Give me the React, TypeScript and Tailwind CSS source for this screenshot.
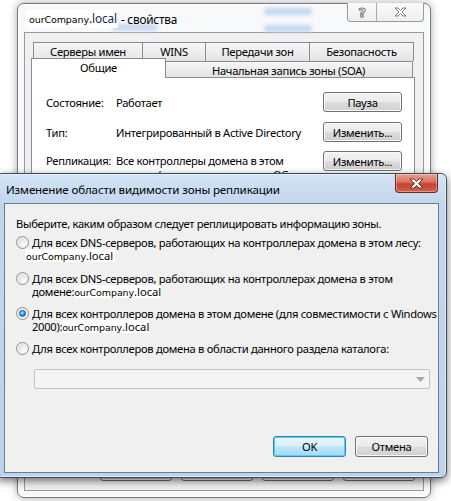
import React from "react";

function Btn({ children, className = "" }: { children?: React.ReactNode; className?: string }) {
  return (
    <div
      className={`flex items-center justify-center rounded-[3px] border border-[#707070] bg-[linear-gradient(#f2f2f2_0%,#ebebeb_48%,#dddddd_52%,#cfcfcf_100%)] shadow-[inset_0_0_0_1px_#fbfbfb] text-black ${className}`}
    >
      {children}
    </div>
  );
}

function Radio({ checked }: { checked?: boolean }) {
  return (
    <div className="flex h-[13px] w-[13px] shrink-0 items-center justify-center rounded-full border border-[#8e8f8f] bg-[radial-gradient(circle_at_65%_70%,#ffffff_0%,#e9e9e9_45%,#cdcdcd_100%)] shadow-[inset_0_0_0_1px_#f4f4f4]">
      {checked && (
        <div className="h-[7px] w-[7px] rounded-full border border-[#1d5a9c] bg-[radial-gradient(circle_at_40%_35%,#a8ecff_0%,#2f8fe6_55%,#0e4a9e_100%)]" />
      )}
    </div>
  );
}

function Domain({ className = "" }: { className?: string }) {
  return (
    <span className={`inline-block h-[13px] bg-white align-top leading-[13px] tracking-normal ${className}`}>
      <span className="[font-family:'DejaVu_Sans',sans-serif] text-[9.5px] tracking-[-0.1px]">ourCompany</span>
      .local
    </span>
  );
}

function CloseX({ color = "#7a7a7a" }: { color?: string }) {
  return (
    <svg width="13" height="10" viewBox="0 0 13 10">
      <path
        d="M1 1 H4 L6.5 3.5 L9 1 H12 L8 5 L12 9 H9 L6.5 6.5 L4 9 H1 L5 5 Z"
        fill="#ffffff"
        stroke={color}
        strokeWidth="1"
        strokeLinejoin="round"
      />
    </svg>
  );
}

const tabCls =
  "flex justify-center border-l border-t border-[#898c95] bg-[linear-gradient(#f6f6f6,#e4e4e4)] pt-[2px]";

export default function App() {
  return (
    <div className="relative h-[501px] w-[451px] overflow-hidden bg-white [font-family:'Noto_Sans',sans-serif] text-[11.2px] leading-[13px] tracking-[-0.3px] text-black">
      {/* back window */}
      <div className="absolute left-[17px] top-[3px] flex h-[495px] w-[414px] flex-col rounded-[7px] border border-[#7a7a7a] bg-[#f8f9fb] shadow-[inset_0_0_0_1px_#ffffff,0_0_8px_rgba(0,0,0,0.35)]">
        <span className="absolute left-[94px] top-[20px] h-[7px] w-[46px] rounded-full bg-[#c9d8f0] blur-[2px]" />
        <span className="absolute left-[246px] top-[4px] h-[7px] w-[48px] rounded-full bg-[#c3d4f0] blur-[2px]" />
        <span className="absolute left-[246px] top-[21px] h-[7px] w-[48px] rounded-full bg-[#c3d4f0] blur-[2px]" />
        {/* title row */}
        <div className="relative flex h-[28px] shrink-0 items-center pl-[8px] pt-[1px]">
          <span className="relative bg-white py-[1px] pl-[3px] pr-[1px] text-[11.8px] leading-[14px] tracking-[-0.1px]">
            <span className="[font-family:'DejaVu_Sans',sans-serif] text-[9.5px] tracking-[-0.1px]">ourCompany</span>
            <span className="text-[#1b2a55]">.local</span>
          </span>
          <span className="relative text-[11.8px] leading-[14px] tracking-[-0.2px]">&nbsp;- свойства</span>
          <div className="absolute right-[6px] top-[-1px] flex h-[19px] overflow-hidden rounded-b-[4px] border border-t-0 border-[#9a9a9a] bg-[linear-gradient(#fafafa,#eeeeee)]">
            <div className="flex w-[29px] items-center justify-center border-r border-[#a9a9a9] text-[13px] font-bold text-white [-webkit-text-stroke:1px_#7a7a7a] [font-family:'DejaVu_Sans',sans-serif]">
              ?
            </div>
            <div className="flex w-[46px] items-center justify-center">
              <CloseX />
            </div>
          </div>
        </div>
        {/* client */}
        <div className="ml-[6px] mr-[6px] flex h-[459px] flex-col border border-[#9a9a9a] bg-[#f0f0f0]">
          <div className="ml-[6px] mt-[9px] flex w-[384px] flex-col">
            {/* row 1 */}
            <div className="ml-[2px] flex h-[19px]">
              <div className={`${tabCls} w-[109px]`}>Серверы имен</div>
              <div className={`${tabCls} w-[63px]`}>WINS</div>
              <div className={`${tabCls} w-[104px]`}>Передачи зон</div>
              <div className={`${tabCls} w-[105px] border-r`}>Безопасность</div>
            </div>
            {/* row 2 */}
            <div className="flex h-[16px] items-end">
              <div className="relative z-10 mb-[-1px] flex h-[20px] w-[135px] justify-center border-l border-r border-t border-[#898c95] bg-white pt-[2px]">
                Общие
              </div>
              <div className="ml-[-1px] flex h-[16px] w-[248px] justify-center border-r border-t border-[#898c95] bg-[linear-gradient(#f6f6f6,#e4e4e4)] pt-[2px]">
                Начальная запись зоны (SOA)
              </div>
            </div>
            {/* panel */}
            <div className="flex h-[373px] flex-col border border-[#898c95] bg-white pl-[14px] pr-[12px] pt-[14px]">
              <div className="flex h-[20px] items-center">
                <div className="w-[70px]">Состояние:</div>
                <div className="flex-1">Работает</div>
                <Btn className="h-[20px] w-[79px]">Пауза</Btn>
              </div>
              <div className="mt-[10px] flex h-[20px] items-center">
                <div className="w-[70px]">Тип:</div>
                <div className="flex-1">Интегрированный в Active Directory</div>
                <Btn className="h-[20px] w-[79px]">Изменить...</Btn>
              </div>
              <div className="mt-[9px] flex items-start">
                <div className="w-[70px] pt-[3px]">Репликация:</div>
                <div className="flex-1 pt-[3px] leading-[14px]">
                  Все контроллеры домена в этом
                  <br />
                  домене (для совместимости с ОС
                </div>
                <Btn className="h-[20px] w-[79px]">Изменить...</Btn>
              </div>
            </div>
          </div>
          <div className="mt-[8px] flex justify-end gap-[9px] pr-[8px]">
            <Btn className="h-[23px] w-[72px]" />
            <Btn className="h-[23px] w-[72px]" />
            <Btn className="h-[23px] w-[72px]" />
            <Btn className="h-[23px] w-[72px]" />
          </div>
        </div>
      </div>

      {/* dialog */}
      <div className="absolute left-[-4px] top-[173px] flex h-[305px] w-[451px] flex-col rounded-[6px] border border-[#3a4a5c] bg-[linear-gradient(180deg,#d3e3f4_0%,#c2d7ee_10%,#bcd3ec_100%)] shadow-[inset_0_0_0_1px_rgba(255,255,255,0.55),0_3px_9px_rgba(0,0,0,0.55)]">
        <div className="relative flex h-[29px] shrink-0 items-center pl-[9px] pt-[3px]">
          <span className="text-[11.6px] leading-[14px] tracking-[-0.15px]">Изменение области видимости зоны репликации</span>
          <div className="absolute right-[8px] top-[0px] flex h-[19px] w-[43px] items-center justify-center rounded-b-[4px] border border-t-0 border-[#6a2a22] bg-[linear-gradient(#e8a194_0%,#d9705f_45%,#c5412e_55%,#d3614c_100%)] shadow-[inset_0_0_0_1px_rgba(255,255,255,0.35)]">
            <svg width="15" height="11" viewBox="0 0 15 11">
              <path
                d="M1 1 H5 L7.5 3.5 L10 1 H14 L9.5 5.5 L14 10 H10 L7.5 7.5 L5 10 H1 L5.5 5.5 Z"
                fill="#ffffff"
                stroke="#5a3a36"
                strokeWidth="1"
                strokeLinejoin="round"
              />
            </svg>
          </div>
        </div>
        <div className="ml-[7px] mr-[7px] flex h-[270px] flex-col border border-[#6c7d91] bg-[#f0f0f0] pl-[11px] pt-[13px]">
          <div>Выберите, каким образом следует реплицировать информацию зоны.</div>
          <div className="mt-[6px] flex gap-[3px]">
            <Radio />
            <div>
              Для всех DNS-серверов, работающих на контроллерах домена в этом лесу:
              <br />
              <Domain className="ml-[-7px] pl-[1px] pr-[2px]" />
            </div>
          </div>
          <div className="mt-[10px] flex gap-[3px]">
            <Radio />
            <div>
              Для всех DNS-серверов, работающих на контроллерах домена в этом
              <br />
              домене:<Domain />
            </div>
          </div>
          <div className="mt-[9px] flex gap-[3px]">
            <Radio checked />
            <div>
              Для всех контроллеров домена в этом домене (для совместимости с Windows
              <br />
              2000):<Domain />
            </div>
          </div>
          <div className="mt-[9px] flex gap-[3px]">
            <Radio />
            <div>Для всех контроллеров домена в области данного раздела каталога:</div>
          </div>
          <div className="ml-[18px] mt-[14px] flex h-[20px] w-[396px] items-center justify-end rounded-[2px] border border-[#c3c3c3] bg-[#f4f4f4] pr-[4px]">
            <svg width="9" height="5" viewBox="0 0 9 5">
              <path d="M0 0 H9 L4.5 5 Z" fill="#a8a8a8" />
            </svg>
          </div>
          <div className="mt-[47px] flex justify-end gap-[9px] pr-[10px]">
            <div className="flex h-[21px] w-[73px] items-center justify-center rounded-[3px] border border-[#3c7fb1] bg-[linear-gradient(#eaf6fd_0%,#d9f0fc_48%,#bee6fd_52%,#a7d9f5_100%)] shadow-[inset_0_0_0_1px_#48d2fd]">
              OK
            </div>
            <Btn className="h-[21px] w-[73px]">Отмена</Btn>
          </div>
        </div>
      </div>
    </div>
  );
}
